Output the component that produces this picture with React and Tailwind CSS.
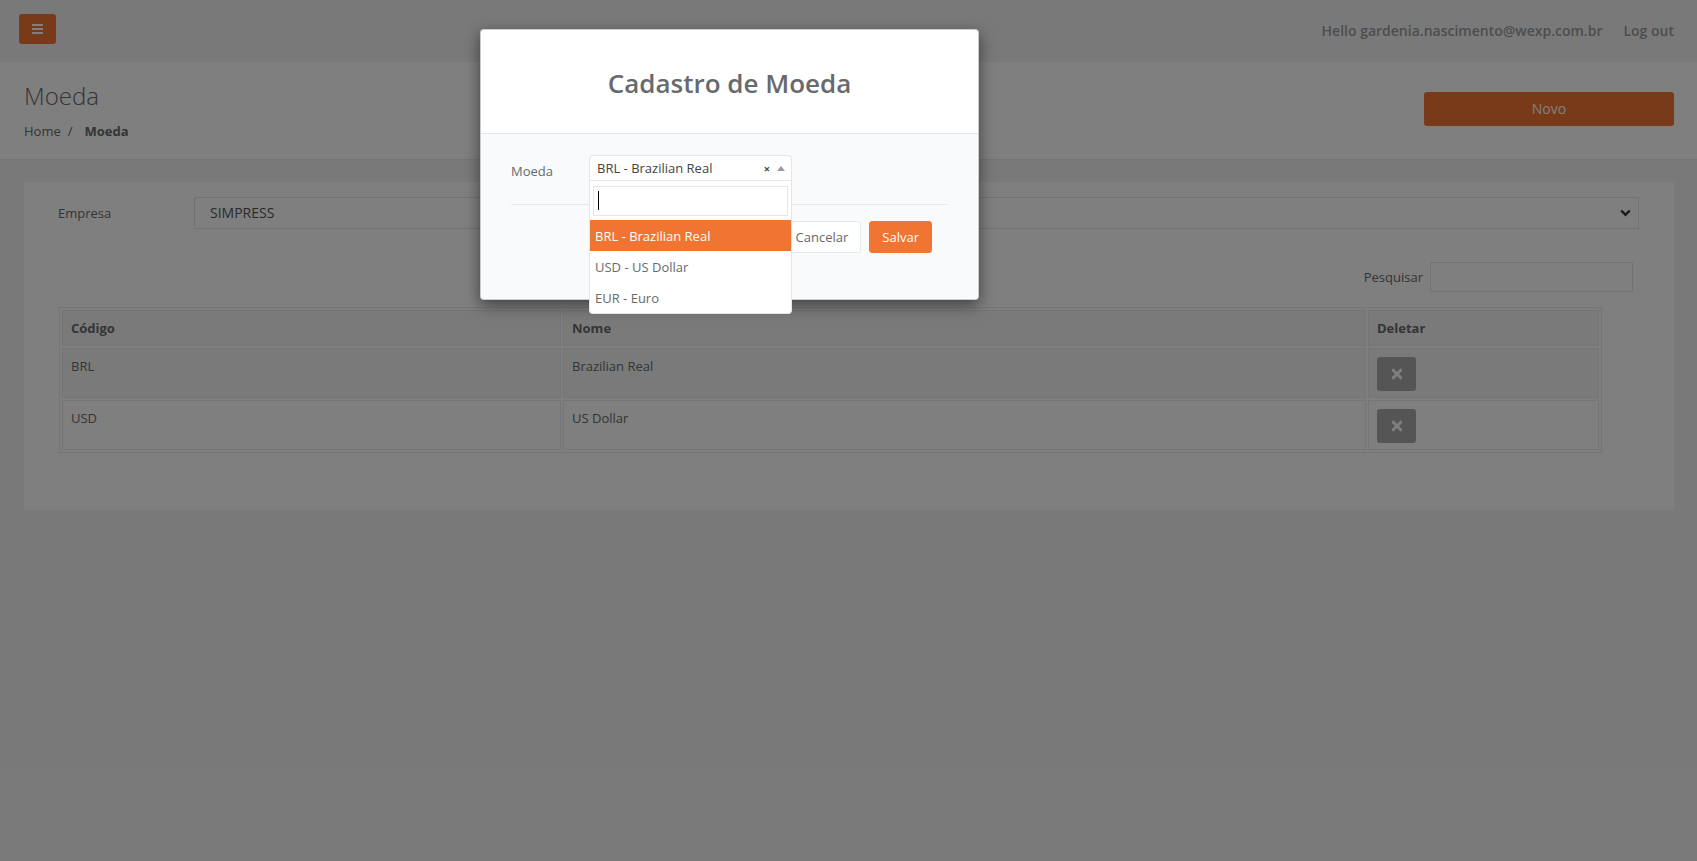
export default function App() {
  return (
    <div className="relative min-h-[861px] w-full overflow-hidden bg-[#f3f3f4] font-['Open_Sans',sans-serif] text-[13px] leading-[18px] text-[#676a6c]">
      {/* Top navbar */}
      <div className="flex h-[62px] items-start justify-between pl-[19px] pr-[23px]">
        <button className="mt-[14px] flex h-[30px] w-[37px] items-center justify-center rounded-[3px] bg-[#f07432]">
          <svg width="11" height="10" viewBox="0 0 11 10">
            <rect x="0" y="0" width="11" height="2" fill="#fff" />
            <rect x="0" y="4" width="11" height="2" fill="#fff" />
            <rect x="0" y="8" width="11" height="2" fill="#fff" />
          </svg>
        </button>
        <div className="flex h-full items-center gap-[21px] text-[14px] font-semibold text-[#999c9e]">
          <span>Hello gardenia.nascimento@wexp.com.br</span>
          <span>Log out</span>
        </div>
      </div>

      {/* Page heading */}
      <div className="flex h-[98px] justify-between border-b border-[#e7eaec] bg-white pl-[24px] pr-[23px]">
        <div>
          <h2 className="mt-[21px] text-[24px] font-light leading-[26px]">Moeda</h2>
          <div className="mt-[13px] flex text-[13px] leading-[18px]">
            <span>Home</span>
            <span className="ml-[7px]">/</span>
            <span className="ml-[12px] font-bold">Moeda</span>
          </div>
        </div>
        <button className="mt-[30px] h-[34px] w-[250px] rounded-[3px] bg-[#f07432] text-[14px] text-white">
          Novo
        </button>
      </div>

      {/* Content */}
      <div className="pl-[24px] pr-[23px] pt-[22px]">
        <div className="bg-white pb-[57px] pl-[34px] pr-[35px] pt-[15px]">
          <div className="flex h-[32px] items-center">
            <div className="w-[136px]">Empresa</div>
            <div className="flex h-[32px] flex-1 items-center justify-between border border-[#e5e6e7] bg-white pl-[15px] pr-[7px] text-[14px] text-[#555]">
              <span>SIMPRESS</span>
              <svg width="11" height="8" viewBox="0 0 11 8">
                <polyline points="1.2,1.5 5.5,5.8 9.8,1.5" fill="none" stroke="#333" strokeWidth="2.4" />
              </svg>
            </div>
          </div>

          <div className="mr-[6px] mt-[33px] flex h-[30px] items-center justify-end">
            <span>Pesquisar</span>
            <div className="ml-[7px] h-[30px] w-[203px] border border-[#e5e6e7] bg-white" />
          </div>

          <table className="ml-[1px] mt-[15px] w-[1543px] table-fixed border-separate border-spacing-[2px] border border-[#e7eaec] text-[13px] leading-[18px]">
            <colgroup>
              <col className="w-[499px]" />
              <col className="w-[803px]" />
              <col />
            </colgroup>
            <thead>
              <tr>
                <th className="border border-[#e7eaec] bg-[#f5f5f6] p-[8px] text-left font-bold">Código</th>
                <th className="border border-[#e7eaec] bg-[#f5f5f6] p-[8px] text-left font-bold">Nome</th>
                <th className="border border-[#e7eaec] bg-[#f5f5f6] p-[8px] text-left font-bold">Deletar</th>
              </tr>
            </thead>
            <tbody>
              {[
                ["BRL", "Brazilian Real", "bg-[#f5f5f6]"],
                ["USD", "US Dollar", "bg-white"],
              ].map(([code, name, bg]) => (
                <tr key={code}>
                  <td className={`border border-[#e7eaec] px-[8px] pb-[6px] pt-[8px] align-top ${bg}`}>{code}</td>
                  <td className={`border border-[#e7eaec] px-[8px] pb-[6px] pt-[8px] align-top ${bg}`}>{name}</td>
                  <td className={`border border-[#e7eaec] px-[8px] pb-[6px] pt-[8px] align-top ${bg}`}>
                    <button className="flex h-[34px] w-[39px] items-center justify-center rounded-[3px] bg-[#aaaaaa]">
                      <svg width="12" height="12" viewBox="0 0 12 12">
                        <path d="M2.2 2.2 L9.8 9.8 M9.8 2.2 L2.2 9.8" stroke="#fff" strokeWidth="3" strokeLinecap="round" />
                      </svg>
                    </button>
                  </td>
                </tr>
              ))}
            </tbody>
          </table>
        </div>
      </div>

      {/* Backdrop */}
      <div className="absolute inset-0 bg-black/50" />

      {/* Modal */}
      <div className="absolute left-[480px] top-[29px] w-[499px] rounded-[4px] border border-black/20 bg-white shadow-[0_5px_15px_rgba(0,0,0,0.5)]">
        <div className="flex h-[104px] items-center justify-center border-b border-[#e5e5e5] pt-[4px]">
          <h4 className="text-[26px] font-semibold leading-[28.6px] text-[#676a6c]">Cadastro de Moeda</h4>
        </div>
        <div className="rounded-b-[4px] bg-[#f8fafb] pb-[46px] pl-[30px] pr-[30px] pt-[21px]">
          <div className="flex">
            <div className="w-[78px] pt-[7px] leading-[18px]">Moeda</div>
            <div className="relative z-10 w-[203px]">
              <div className="flex h-[26px] items-center justify-between rounded-t-[4px] border border-[#e5e6e7] bg-white pl-[7px] pr-[6px] text-[#444]">
                <span>BRL - Brazilian Real</span>
                <div className="flex items-center gap-[7px]">
                  <span className="text-[11px] font-bold leading-none text-[#444]">×</span>
                  <svg width="8" height="5" viewBox="0 0 8 5">
                    <polygon points="0,5 4,0 8,5" fill="#999" />
                  </svg>
                </div>
              </div>
              <div className="absolute left-0 top-[26px] w-full rounded-b-[4px] border-x border-b border-[#e5e6e7] bg-white">
                <div className="px-[3px] pb-[4px] pt-[5px]">
                  <div className="relative h-[30px] border border-[#e5e6e7] bg-white">
                    <span className="absolute left-[4px] top-[4px] h-[19px] w-[1px] bg-black" />
                  </div>
                </div>
                <div className="flex h-[31px] items-center bg-[#f07432] px-[5px] text-white">BRL - Brazilian Real</div>
                <div className="flex h-[31px] items-center px-[5px]">USD - US Dollar</div>
                <div className="flex h-[31px] items-center px-[5px]">EUR - Euro</div>
              </div>
            </div>
          </div>
          <div className="mt-[23px] border-t border-[#e7eaec]" />
          <div className="mt-[16px] flex justify-end gap-[8px] pr-[16px]">
            <button className="h-[32px] rounded-[3px] border border-[#e7eaec] bg-white px-[12px] text-[13px] text-[#676a6c]">Cancelar</button>
            <button className="h-[32px] rounded-[3px] border border-[#f07432] bg-[#f07432] px-[12px] text-[13px] text-white">Salvar</button>
          </div>
        </div>
      </div>
    </div>
  );
}
